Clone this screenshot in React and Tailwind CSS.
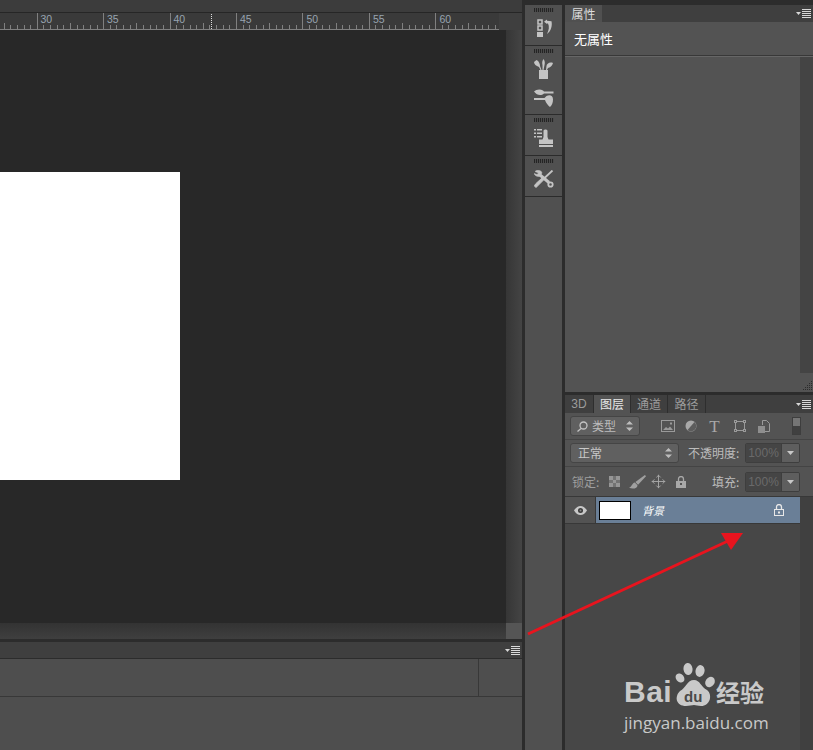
import React from "react";
import { Move } from "lucide-react";

const cjk = "font-['Noto_Sans_CJK_SC','Noto_Sans',sans-serif]";

const PanelMenu = () => (
  <svg width="15" height="9" viewBox="0 0 15 9" className="shrink-0">
    <path d="M0 3h5L2.5 6z" fill="#d8d8d8" />
    <path d="M6 .5h9M6 2.5h9M6 4.5h9M6 6.5h9M6 8.5h9" stroke="#d8d8d8" strokeWidth="1" />
  </svg>
);

const Ruler = () => {
  const ticks = [];
  for (let i = 0; i < 75; i++) ticks.push(3.6 + i * 6.64);
  const labels = [30, 35, 40, 45, 50, 55, 60];
  return (
    <svg width="499" height="17" viewBox="0 0 499 17" className="block">
      {ticks.map((x, i) => {
        const major = (i - 5) % 10 === 0;
        const mid = Math.abs((i - 5) % 10) === 5;
        const top = major ? 0 : mid ? 10 : 12;
        return <line key={i} x1={Math.round(x) + 0.5} x2={Math.round(x) + 0.5} y1={top} y2="16" stroke="#808080" />;
      })}
      <line x1="0" x2="499" y1="16.5" y2="16.5" stroke="#808080" />
      <line x1="211.5" x2="211.5" y1="1" y2="16" stroke="#ddd" strokeDasharray="1 1" />
      {labels.map((n, i) => (
        <text key={n} x={40.5 + i * 66.5} y="10" fontSize="10.500" fill="#98a4b0" fontFamily="Liberation Sans, sans-serif">
          {n}
        </text>
      ))}
    </svg>
  );
};

const Grip = () => (
  <div className="h-[4px] w-[20px] bg-[repeating-linear-gradient(90deg,#242424_0,#242424_1px,#4a4a4a_1px,#4a4a4a_2px)]" />
);

const HistoryIcon = () => (
  <svg width="16" height="18" viewBox="0 0 16 18" fill="none">
    <rect x="1" y="1" width="4" height="4" stroke="#c4c4c4" strokeWidth="1.500" />
    <rect x="1" y="7" width="4" height="4" stroke="#c4c4c4" strokeWidth="1.500" />
    <rect x="0" y="13" width="6" height="5" fill="#c4c4c4" />
    <path d="M7 2.700L10 .5v1.200l4.500.5C15.500 7 14 12 10 15c2-4 2.500-7.500 1-10.500L10 4.500V5z" fill="#c4c4c4" />
  </svg>
);

const BrushesIcon = () => (
  <svg width="19" height="20" viewBox="0 0 19 20" fill="#c4c4c4">
    <rect x="5" y="11" width="9" height="9" />
    <path d="M6.500 11L5 8C2 7 0 5 0 3l2.500-2C5 2 6 5 6 7l1.500 4z" />
    <path d="M8.500 11V6C8 4 8 2 9.500 0c1.500 2 1.500 4 1 6l-1 5z" />
    <path d="M12 11l.5-4c0-2 3-4.500 6.500-3-.5 2-2 4.500-5 5l-1 2z" />
  </svg>
);

const PresetsIcon = () => (
  <svg width="20" height="18" viewBox="0 0 20 18" fill="#c4c4c4">
    <path d="M0 2.500C2 .5 6-.5 9 1.500l1 1h9.500v2H10C7 7 3 6.500 0 2.500z" />
    <path d="M0 9h10.500l2-2c3-1.500 6.500-1 6.500 3.500 0 3-1 5.500-3 7.500-2-1.500-4-4-5-7H0z" />
  </svg>
);

const StampIcon = () => (
  <svg width="19" height="18" viewBox="0 0 19 18" fill="#c4c4c4">
    <path d="M0 0h2v1.500H0zM0 3.500h2V5H0zM0 7h2v1.500H0zM3 0h5v1.500H3zM3 3.500h5V5H3zM3 7h5v1.500H3z" />
    <path d="M9.500 2c0-2 4-2 4 0v6l1 2.500H19V15H5v-4.500h3.500l1-2.500z" />
    <rect x="5" y="16" width="14" height="2" />
  </svg>
);

const ToolsIcon = () => (
  <svg width="20" height="18" viewBox="0 0 20 18" fill="none" stroke="#c4c4c4">
    <path d="M6 5l9 7.500" strokeWidth="3" />
    <path d="M1 1.500C3-.5 7-.5 8 3L5.500 6.500C3 7 1 5.500 0 3.500l3 1 1.500-1.500z" fill="#c4c4c4" strokeWidth="0.500" />
    <circle cx="16.500" cy="14.500" r="2.200" strokeWidth="1.800" />
    <path d="M18.500 .5L10 8.500" strokeWidth="1.800" />
    <path d="M10.500 9L3.500 16l-1.500 1.500L.5 16l1-2 7-6.500z" fill="#c4c4c4" strokeWidth="1" />
  </svg>
);

const ImageIcon = () => (
  <svg width="14" height="12" viewBox="0 0 14 12" fill="none">
    <rect x="0.500" y="0.500" width="13" height="11" stroke="#9a9a9a" />
    <path d="M2 10l3-3 2 1.500 2-2 3 3.500z" fill="#9a9a9a" />
    <rect x="9" y="2.500" width="2" height="2" fill="#9a9a9a" />
  </svg>
);

const AdjustIcon = () => (
  <svg width="12" height="12" viewBox="0 0 12 12">
    <circle cx="6" cy="6" r="5.500" fill="#a8a8a8" />
    <path d="M9.500 2L2.500 10A5 5 0 0 0 9.500 2z" fill="#5c5c5c" />
  </svg>
);

const ShapeIcon = () => (
  <svg width="12" height="12" viewBox="0 0 12 12" fill="none" stroke="#9a9a9a">
    <rect x="1.500" y="1.500" width="9" height="9" />
    <rect x="0.500" y="0.500" width="2" height="2" fill="#535353" />
    <rect x="9.500" y="0.500" width="2" height="2" fill="#535353" />
    <rect x="0.500" y="9.500" width="2" height="2" fill="#535353" />
    <rect x="9.500" y="9.500" width="2" height="2" fill="#535353" />
  </svg>
);

const SmartIcon = () => (
  <svg width="12" height="13" viewBox="0 0 12 13" fill="none">
    <path d="M4.500 5V.5h4l3 3v8H7" stroke="#9a9a9a" />
    <rect x="0" y="6" width="7" height="7" fill="#8e8e8e" />
  </svg>
);

const CheckerIcon = () => (
  <svg width="11" height="11" viewBox="0 0 3 3" shapeRendering="crispEdges">
    <rect width="3" height="3" fill="#737373" />
    <path d="M0 0h1v1H0zM2 0h1v1H2zM1 1h1v1H1zM0 2h1v1H0zM2 2h1v1H2z" fill="#969696" />
  </svg>
);

const BrushIcon = () => (
  <svg width="17" height="14" viewBox="0 0 16 13" fill="#a0a0a0">
    <path d="M15 0L6 6.500 8.500 9 16 1z" />
    <path d="M5.500 7C3 7.500 3 10.500 0 12c4 1.500 8 .5 8-2.500z" />
  </svg>
);

const LockIcon = ({ color = "#a8a8a8", open = false }) => (
  <svg width="10" height="12" viewBox="0 0 10 12" fill="none">
    <path d="M2.500 5V3a2.500 2.500 0 0 1 5 0v2" stroke={color} strokeWidth="1.300" />
    {open ? (
      <>
        <rect x="0.500" y="5.500" width="9" height="6" stroke={color} />
        <rect x="4" y="7.500" width="2" height="2" fill={color} />
      </>
    ) : (
      <path d="M0 5h10v7H0zM4 7v2h2V7z" fill={color} fillRule="evenodd" />
    )}
  </svg>
);

const Updown = () => (
  <svg width="7" height="10" viewBox="0 0 7 10" fill="#bdbdbd" className="shrink-0">
    <path d="M3.500 0L7 3.500H0zM0 6.500h7L3.500 10z" />
  </svg>
);

const PercentBox = () => (
  <div className="w-[55px] h-[20px] flex rounded-[2px] border border-[#3e3e3e] overflow-hidden">
    <div className="w-[35px] bg-[#454545] text-[#6a6a6a] text-[12px] leading-[18px] text-center font-['Liberation_Sans',sans-serif]">
      100%
    </div>
    <div className="flex-1 bg-[#5e5e5e] border-l border-[#3e3e3e] flex items-center justify-center">
      <svg width="7" height="4" viewBox="0 0 7 4" fill="#c8c8c8">
        <path d="M0 0h7L3.500 4z" />
      </svg>
    </div>
  </div>
);

const EyeIcon = () => (
  <svg width="13" height="9" viewBox="0 0 13 9">
    <path d="M0 4.500C2 1.500 4 0 6.500 0S11 1.500 13 4.500C11 7.500 9 9 6.500 9S2 7.500 0 4.500z" fill="#c8c8c8" />
    <circle cx="6.500" cy="4.500" r="2.500" fill="#3a3a3a" />
    <circle cx="6.500" cy="4.500" r="1" fill="#8a8a8a" />
  </svg>
);

const LayerTab = ({ label, active, width, latin }) => (
  <div
    className={`${width} h-full flex items-center justify-center text-[12px] border-r border-[#2e2e2e] ${
      active ? "bg-[#535353] text-[#e8e8e8]" : "text-[#9c9c9c]"
    } ${latin ? "font-['Liberation_Sans',sans-serif]" : ""}`}
  >
    {label}
  </div>
);

const ToolGroup = ({ className, children }) => (
  <div className={`${className} flex flex-col items-center bg-[#505050] border-b border-[#2b2b2b] pt-[3px]`}>
    <Grip />
    {children}
  </div>
);

const Logo = () => (
  <div className="absolute left-[624px] top-[663px] w-[146px] text-[#c9c9c9] select-none">
    <div className="flex items-end h-[46px]">
      <span className="w-[49px] shrink-0 font-['Liberation_Sans',sans-serif] font-bold text-[30px] leading-[34px] tracking-[0.5px]">Bai</span>
      <svg width="44" height="46" viewBox="0 0 44 46" className="shrink-0">
        <g fill="#c9c9c9">
          <ellipse cx="7" cy="15" rx="4" ry="5" transform="rotate(-40 7 15)" />
          <ellipse cx="15" cy="6" rx="4.500" ry="6" transform="rotate(-8 15 6)" />
          <ellipse cx="27" cy="8" rx="4.500" ry="6" transform="rotate(12 27 8)" />
          <ellipse cx="37" cy="19" rx="4.500" ry="5.500" transform="rotate(35 37 19)" />
          <path d="M21 17c6 0 7 7 13 10 6 5 3 16-6 16-3 0-5-1-7-1s-5 1-8 1c-10 0-12-9-6-15 6-3 7-11 14-11z" />
        </g>
        <text x="11" y="39" fontSize="15" fontWeight="700" fill="#4a4a4a" fontFamily="Liberation Sans, sans-serif">du</text>
      </svg>
      <span className={`${cjk} ml-[-1px] text-[24px] leading-[34px] font-bold whitespace-nowrap`}>经验</span>
    </div>
    <div className="font-['Open_Sans',sans-serif] text-[17px] leading-[22px] mt-[3px] whitespace-nowrap">
      jingyan.baidu.com
    </div>
  </div>
);

export default function App() {
  return (
    <div className={`${cjk} relative w-[813px] h-[750px] overflow-hidden flex bg-[#2c2c2c]`}>
      {/* document area */}
      <div className="w-[522px] flex flex-col">
        <div className="h-[13px] bg-[#3c3c3c] border-b border-[#262626]" />
        <div className="h-[17px] bg-[#3a3a3a] flex">
          <div className="w-[499px] overflow-hidden">
            <Ruler />
          </div>
          <div className="flex-1 bg-[#3f3f3f]" />
        </div>
        <div className="h-[593px] flex">
          <div className="w-[506px] bg-[#282828] pt-[142px]">
            <div className="w-[180px] h-[308px] bg-white" />
          </div>
          <div className="flex-1 bg-linear-to-r from-[#363636] to-[#444444]" />
        </div>
        <div className="h-[16px] flex bg-linear-to-b from-[#333333] to-[#3f3f3f]">
          <div className="w-[506px]" />
          <div className="flex-1 bg-[#555555]" />
        </div>
        <div className="h-[3px] bg-[#2c2c2c]" />
        <div className="h-[17px] bg-[#3f3f3f] border-b border-[#2c2c2c] flex items-center justify-end pr-[2px]">
          <PanelMenu />
        </div>
        <div className="h-[38px] bg-[#4e4e4e] border-b border-[#383838] flex justify-end">
          <div className="w-[44px] border-l border-[#383838]" />
        </div>
        <div className="flex-1 bg-[#4e4e4e]" />
      </div>

      {/* collapsed tool column */}
      <div className="ml-[3px] w-[37px] flex flex-col">
        <div className="h-[5px] bg-[#2c2c2c]" />
        <ToolGroup className="h-[41px]">
          <div className="mt-[7px] ml-[2px]">
            <HistoryIcon />
          </div>
        </ToolGroup>
        <ToolGroup className="h-[69px]">
          <div className="mt-[6px]">
            <BrushesIcon />
          </div>
          <div className="mt-[10px]">
            <PresetsIcon />
          </div>
        </ToolGroup>
        <ToolGroup className="h-[41px]">
          <div className="mt-[7px]">
            <StampIcon />
          </div>
        </ToolGroup>
        <ToolGroup className="h-[41px]">
          <div className="mt-[7px]">
            <ToolsIcon />
          </div>
        </ToolGroup>
        <div className="flex-1 bg-[#505050]" />
      </div>

      {/* right panels */}
      <div className="ml-[3px] w-[248px] flex flex-col">
        <div className="h-[5px] bg-[#2c2c2c]" />
        <div className="h-[17px] bg-[#3f3f3f] flex items-center justify-between pr-[2px]">
          <div className="w-[37px] h-full bg-[#505050] text-[#dcdcdc] text-[12px] leading-[17px] text-center">属性</div>
          <PanelMenu />
        </div>
        <div className="h-[34px] bg-[#535353] border-b border-[#383838] pl-[9px] text-white text-[13px] leading-[33px]">无属性</div>
        <div className="h-[336px] bg-[#535353] border-t border-[#666666] flex">
          <div className="flex-1" />
          <div className="w-[13px] flex flex-col">
            <div className="h-[316px] bg-[#444444]" />
            <div className="flex-1 flex items-end justify-end">
              <svg width="12" height="12" viewBox="0 0 12 12" fill="#2c2c2c">
                <path d="M10 1h1v1h-1zM8 3h1v1H8zM10 3h1v1h-1zM6 5h1v1H6zM8 5h1v1H8zM10 5h1v1h-1zM4 7h1v1H4zM6 7h1v1H6zM8 7h1v1H8zM10 7h1v1h-1zM2 9h1v1H2zM4 9h1v1H4zM6 9h1v1H6zM8 9h1v1H8zM10 9h1v1h-1z" />
              </svg>
            </div>
          </div>
        </div>
        <div className="h-[3px] bg-[#2c2c2c]" />

        {/* layers panel */}
        <div className="h-[18px] bg-[#3f3f3f] flex items-center pr-[2px]">
          <LayerTab label="3D" width="w-[29px]" latin />
          <LayerTab label="图层" width="w-[37px]" active />
          <LayerTab label="通道" width="w-[37px]" />
          <LayerTab label="路径" width="w-[38px]" />
          <div className="flex-1" />
          <PanelMenu />
        </div>
        <div className="h-[27px] bg-[#535353] border-b border-[#444444] flex items-center pl-[5px]">
          <div className="w-[70px] h-[20px] rounded-[3px] bg-[#606060] border border-[#454545] flex items-center pl-[6px] pr-[6px] text-[#bcbcbc] text-[12px]">
            <svg width="11" height="11" viewBox="0 0 11 11" fill="none" stroke="#c4c4c4" strokeWidth="1.300" className="shrink-0">
              <circle cx="6.500" cy="4.500" r="3.500" />
              <path d="M4 7.500L.5 10.500" />
            </svg>
            <span className="ml-[4px] flex-1 leading-none">类型</span>
            <Updown />
          </div>
          <div className="ml-[21px] flex items-center">
            <ImageIcon />
            <div className="ml-[10px]">
              <AdjustIcon />
            </div>
            <div className="ml-[11px] w-[13px] text-center font-['Liberation_Serif',serif] text-[17px] leading-none text-[#a8a8a8]">T</div>
            <div className="ml-[13px]">
              <ShapeIcon />
            </div>
            <div className="ml-[12px]">
              <SmartIcon />
            </div>
          </div>
          <div className="ml-[22px] w-[9px] h-[18px] flex flex-col border border-[#3e3e3e]">
            <div className="h-[8px] bg-[#757575]" />
            <div className="flex-1 bg-[#404040]" />
          </div>
        </div>
        <div className="h-[27px] bg-[#535353] border-b border-[#444444] flex items-center pl-[5px]">
          <div className="w-[109px] h-[20px] rounded-[3px] bg-[#606060] border border-[#454545] flex items-center pl-[7px] pr-[6px] text-[#c8c8c8] text-[12px]">
            <span className="flex-1 leading-none">正常</span>
            <Updown />
          </div>
          <span className="ml-[9px] w-[57px] text-[#bcbcbc] text-[12px] whitespace-nowrap">不透明度:</span>
          <PercentBox />
        </div>
        <div className="h-[30px] bg-[#535353] flex items-center pl-[7px] border-b border-[#383838]">
          <span className="w-[37px] text-[#9e9e9e] text-[12px] whitespace-nowrap">锁定:</span>
          <CheckerIcon />
          <div className="ml-[9px]">
            <BrushIcon />
          </div>
          <Move size={15} color="#a8a8a8" strokeWidth={1.500} className="ml-[5px]" />
          <div className="ml-[10px]">
            <LockIcon />
          </div>
          <span className="ml-[26px] w-[33px] text-[#bcbcbc] text-[12px] whitespace-nowrap">填充:</span>
          <PercentBox />
        </div>
        <div className="flex-1 bg-[#474747] flex">
          <div className="flex-1 flex flex-col">
            <div className="h-[27px] flex border-b border-[#383838]">
              <div className="w-[31px] bg-[#535353] flex items-center justify-center border-r border-[#383838]">
                <EyeIcon />
              </div>
              <div className="flex-1 bg-[#6a7f97] flex items-center pl-[3px] pr-[16px]">
                <div className="w-[32px] h-[19px] bg-white border border-black" />
                <span className="ml-[11px] flex-1 text-white text-[11px] italic leading-none">背景</span>
                <LockIcon color="#e8e8e8" open />
              </div>
            </div>
          </div>
          <div className="w-[13px] bg-[#404040]" />
        </div>
      </div>

      {/* red annotation arrow */}
      <svg width="813" height="750" viewBox="0 0 813 750" className="absolute left-0 top-0 pointer-events-none">
        <path d="M528 634L728 541" stroke="#e8141e" strokeWidth="3" fill="none" />
        <path d="M743 533L721 533 731 550z" fill="#e8141e" />
      </svg>

      <Logo />
    </div>
  );
}
